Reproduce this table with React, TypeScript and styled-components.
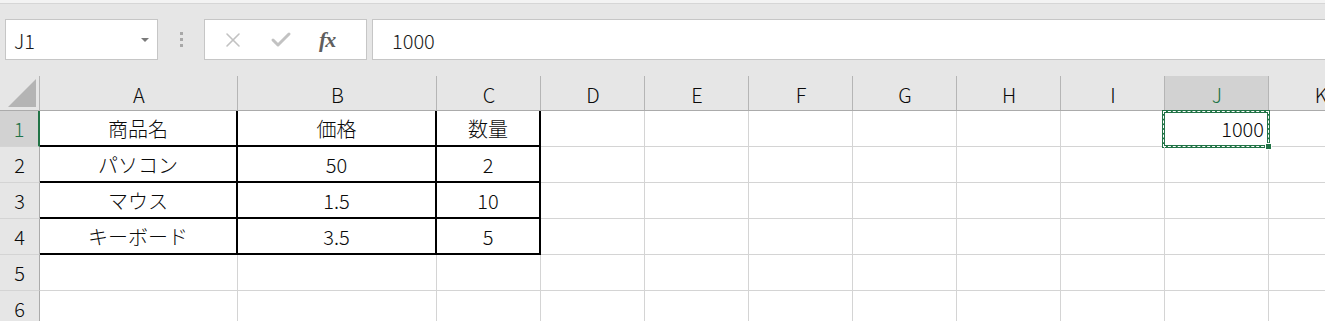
import React from 'react';
import styled, { createGlobalStyle } from 'styled-components';
import { X, Check } from 'lucide-react';

const GlobalStyle = createGlobalStyle`
  html, body {
    margin: 0;
    padding: 0;
    height: 100%;
    overflow: hidden;
    background: #ffffff;
  }
  body {
    font-family: "Noto Sans CJK JP", "Noto Sans", sans-serif;
    font-weight: 300;
    color: #0a0a0a;
  }
`;

const GREEN = '#217346';
const GRID = '#d4d4d4';
const HEAD_LINE = '#b5b5b5';

const Window = styled.div`
  display: flex;
  flex-direction: column;
  width: 100%;
  height: 100vh;
  overflow: hidden;

  & > * {
    flex-shrink: 0;
  }
`;

const TopStrip = styled.div`
  height: 3px;
  background: #f3f3f3;
  border-bottom: 1px solid #d6d6d6;
`;

const FormulaBar = styled.div`
  display: flex;
  align-items: flex-start;
  height: 72px;
  padding: 15px 0 0 5px;
  box-sizing: border-box;
  background: #e6e6e6;
`;

const NameBox = styled.div`
  position: relative;
  display: flex;
  align-items: center;
  width: 153px;
  height: 41px;
  box-sizing: border-box;
  padding: 2px 0 0 8px;
  background: #ffffff;
  border: 1px solid #c6c6c6;
  font-size: 20px;
  color: #1a1a1a;
`;

const DropArrow = styled.span`
  position: absolute;
  right: 8px;
  top: 18px;
  width: 0;
  height: 0;
  border-left: 4px solid transparent;
  border-right: 4px solid transparent;
  border-top: 4px solid #7a7a7a;
`;

const Grip = styled.div`
  display: flex;
  flex-direction: column;
  align-items: center;
  gap: 3px;
  width: 46px;
  padding-top: 13px;
  box-sizing: border-box;

  span {
    width: 3px;
    height: 3px;
    background: #a8a8a8;
  }
`;

const FxBox = styled.div`
  display: flex;
  align-items: center;
  width: 163px;
  height: 41px;
  box-sizing: border-box;
  padding-left: 16px;
  gap: 24px;
  background: #ffffff;
  border: 1px solid #c6c6c6;
`;

const FxLabel = styled.span`
  font-family: "Liberation Serif", serif;
  font-style: italic;
  font-weight: bold;
  font-size: 22px;
  color: #5f5f5f;
  margin-left: 2px;
  letter-spacing: -1px;
`;

const FormulaInput = styled.div`
  display: flex;
  align-items: center;
  flex: 1;
  height: 41px;
  margin-left: 5px;
  margin-right: -2px;
  box-sizing: border-box;
  padding: 2px 0 0 19px;
  background: #ffffff;
  border: 1px solid #c6c6c6;
  font-size: 20px;
  color: #1a1a1a;
`;

const Sheet = styled.div`
  display: grid;
  grid-template-columns: 40px 198px 199px repeat(9, 104px);
  grid-template-rows: 35px;
  grid-auto-rows: 36px;
  width: max-content;
  font-size: 20px;
`;

const Corner = styled.div`
  display: flex;
  align-items: flex-end;
  justify-content: flex-end;
  padding: 0 3px 3px 0;
  box-sizing: border-box;
  background: #e6e6e6;
  border-right: 1px solid ${HEAD_LINE};
  border-bottom: 1px solid #ababab;

  span {
    width: 28px;
    height: 28px;
    background: #b4b4b4;
    clip-path: polygon(100% 0, 100% 100%, 0 100%);
  }
`;

const ColHead = styled.div<{ $active?: boolean }>`
  position: relative;
  display: flex;
  align-items: center;
  justify-content: center;
  padding-top: 2px;
  box-sizing: border-box;
  background: #e6e6e6;
  border-bottom: 1px solid #ababab;
  color: ${p => (p.$active ? GREEN : '#0a0a0a')};

  &::before {
    content: '';
    position: absolute;
    inset: 0;
    background: ${p => (p.$active ? '#d2d2d2' : 'transparent')};
    border-right: 1px solid ${HEAD_LINE};
  }

  span {
    position: relative;
  }
`;

const RowHead = styled.div<{ $active?: boolean }>`
  display: flex;
  align-items: center;
  justify-content: center;
  box-sizing: border-box;
  background: ${p => (p.$active ? '#d2d2d2' : '#e6e6e6')};
  color: ${p => (p.$active ? GREEN : '#0a0a0a')};
  border-bottom: 1px solid ${GRID};
  border-right: ${p => (p.$active ? `2px solid ${GREEN}` : '1px solid #ababab')};
`;

const Cell = styled.div<{ $align?: 'center' | 'right'; $ruled?: boolean; $selected?: boolean }>`
  position: relative;
  display: flex;
  align-items: center;
  justify-content: ${p => (p.$align === 'right' ? 'flex-end' : 'center')};
  padding: 0 4px;
  box-sizing: border-box;
  border-right: 1px solid ${p => (p.$ruled ? '#000000' : GRID)};
  border-bottom: 1px solid ${p => (p.$ruled ? '#000000' : GRID)};
  ${p => p.$ruled && 'border-width: 0 2px 2px 0; padding-top: 1px;'}

  /* copy marquee: green frame with white dashes running through it */
  ${p =>
    p.$selected &&
    `
    &::before {
      content: '';
      position: absolute;
      top: -1px;
      left: -3px;
      right: -2px;
      bottom: -2px;
      border: 3px solid ${GREEN};
    }
    &::after {
      content: '';
      position: absolute;
      top: 0;
      left: -2px;
      right: -1px;
      bottom: -1px;
      border: 1px dashed #ffffff;
    }
  `}
`;

const FillHandle = styled.span`
  position: absolute;
  right: -4px;
  bottom: -4px;
  width: 5px;
  height: 5px;
  background: ${GREEN};
  border: 1px solid #ffffff;
  z-index: 2;
`;

const columns = ['A', 'B', 'C', 'D', 'E', 'F', 'G', 'H', 'I', 'J', 'K'];

const table: string[][] = [
  ['商品名', '価格', '数量'],
  ['パソコン', '50', '2'],
  ['マウス', '1.5', '10'],
  ['キーボード', '3.5', '5'],
];

const rowCount = 6;

export default function App() {
  return (
    <Window>
      <GlobalStyle />
      <TopStrip />
      <FormulaBar>
        <NameBox>
          J1
          <DropArrow />
        </NameBox>
        <Grip>
          <span />
          <span />
          <span />
        </Grip>
        <FxBox>
          <X size={24} color="#c2c2c2" strokeWidth={1.6} />
          <Check size={24} color="#c2c2c2" strokeWidth={3} />
          <FxLabel>fx</FxLabel>
        </FxBox>
        <FormulaInput>1000</FormulaInput>
      </FormulaBar>

      <Sheet>
        <Corner>
          <span />
        </Corner>
        {columns.map(c => (
          <ColHead key={c} $active={c === 'J'}>
            <span>{c}</span>
          </ColHead>
        ))}

        {Array.from({ length: rowCount }, (_, r) => (
          <React.Fragment key={r}>
            <RowHead $active={r === 0}>{r + 1}</RowHead>
            {columns.map((c, ci) => {
              const inTable = r < table.length && ci < 3;
              const isJ1 = r === 0 && c === 'J';
              return (
                <Cell
                  key={c}
                  $ruled={inTable}
                  $selected={isJ1}
                  $align={isJ1 ? 'right' : 'center'}
                >
                  {inTable ? table[r][ci] : isJ1 ? '1000' : null}
                  {isJ1 && <FillHandle />}
                </Cell>
              );
            })}
          </React.Fragment>
        ))}
      </Sheet>
    </Window>
  );
}
